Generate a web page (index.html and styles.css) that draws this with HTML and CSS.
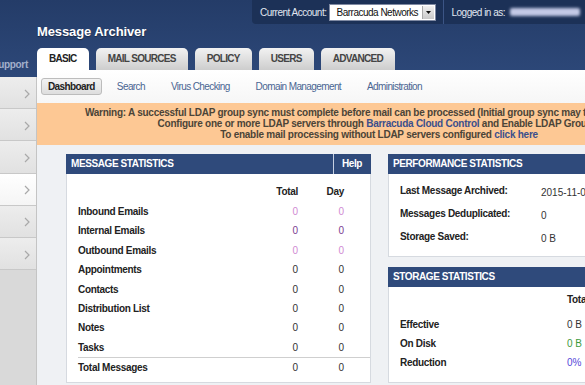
FILE: index.html
```html
<!DOCTYPE html>
<html lang="en">
<head>
  <meta charset="UTF-8" />
  <meta name="viewport" content="width=device-width, initial-scale=1.0" />
  <title>Message Archiver</title>
  <link rel="stylesheet" href="styles.css">
</head>
<body>
  <div class="page">
    <div class="side">
      <div class="side-head"><a class="support" href="#">Support</a></div>
      <ul class="side-nav">
        <li><svg class="chev" width="6" height="10" viewBox="0 0 6 10"><polyline points="1,1 5,5 1,9" /></svg></li>
        <li><svg class="chev" width="6" height="10" viewBox="0 0 6 10"><polyline points="1,1 5,5 1,9" /></svg></li>
        <li><svg class="chev" width="6" height="10" viewBox="0 0 6 10"><polyline points="1,1 5,5 1,9" /></svg></li>
        <li class="active"><svg class="chev" width="6" height="10" viewBox="0 0 6 10"><polyline points="1,1 5,5 1,9" /></svg></li>
        <li><svg class="chev" width="6" height="10" viewBox="0 0 6 10"><polyline points="1,1 5,5 1,9" /></svg></li>
        <li><svg class="chev" width="6" height="10" viewBox="0 0 6 10"><polyline points="1,1 5,5 1,9" /></svg></li>
      </ul>
    </div>

    <div class="main">
      <header class="masthead">
        <div class="topbar">
          <span class="topbar-label">Current Account:</span>
          <div class="account-select">
            <span>Barracuda Networks</span>
            <span class="select-arrow">
              <svg width="5" height="3" viewBox="0 0 5 3"><polygon points="0,0 5,0 2.5,3" /></svg>
            </span>
          </div>
          <span class="topbar-sep"></span>
          <span class="topbar-label">Logged in as:</span>
          <span class="user-name"></span>
          <span class="topbar-sep"></span>
        </div>
        <h1 class="title">Message Archiver</h1>
        <nav class="tabs">
          <a class="tab active" href="#">BASIC</a>
          <a class="tab" href="#">MAIL SOURCES</a>
          <a class="tab" href="#">POLICY</a>
          <a class="tab" href="#">USERS</a>
          <a class="tab" href="#">ADVANCED</a>
        </nav>
      </header>

      <nav class="subnav">
        <span class="subnav-current">Dashboard</span>
        <a class="subnav-link" href="#">Search</a>
        <a class="subnav-link" href="#">Virus Checking</a>
        <a class="subnav-link" href="#">Domain Management</a>
        <a class="subnav-link" href="#">Administration</a>
      </nav>

      <div class="warning">
        Warning: A successful LDAP group sync must complete before mail can be processed (Initial group sync may take a few minutes).<br>
        Configure one or more LDAP servers through <a href="#">Barracuda Cloud Control</a> and Enable LDAP Groups.<br>
        To enable mail processing without LDAP servers configured <a href="#">click here</a>
      </div>

      <div class="dashboard">
        <section class="panel panel-messages">
          <div class="panel-head">
            <span class="panel-title">MESSAGE STATISTICS</span>
            <a class="panel-help" href="#">Help</a>
          </div>
          <div class="panel-body">
            <div class="stats">
              <span></span><b class="num">Total</b><b class="num">Day</b><span></span>

              <b>Inbound Emails</b><span class="num light">0</span><span class="num light">0</span><span></span>
              <b>Internal Emails</b><span class="num dark">0</span><span class="num dark">0</span><span></span>
              <b>Outbound Emails</b><span class="num light">0</span><span class="num light">0</span><span></span>
              <b>Appointments</b><span class="num">0</span><span class="num">0</span><span></span>
              <b>Contacts</b><span class="num">0</span><span class="num">0</span><span></span>
              <b>Distribution List</b><span class="num">0</span><span class="num">0</span><span></span>
              <b>Notes</b><span class="num">0</span><span class="num">0</span><span></span>
              <b>Tasks</b><span class="num">0</span><span class="num">0</span><span></span>

              <b class="total">Total Messages</b><span class="num total">0</span><span class="num total">0</span><span class="total"></span>
            </div>
          </div>
        </section>

        <div class="right-col">
          <section class="panel">
            <div class="panel-head">
              <span class="panel-title">PERFORMANCE STATISTICS</span>
            </div>
            <div class="panel-body">
              <div class="perf">
                <b>Last Message Archived:</b><span class="perf-value">2015-11-05 09:14:32</span>
                <b>Messages Deduplicated:</b><span class="perf-value">0</span>
                <b>Storage Saved:</b><span class="perf-value">0 B</span>
              </div>
            </div>
          </section>

          <section class="panel">
            <div class="panel-head">
              <span class="panel-title">STORAGE STATISTICS</span>
            </div>
            <div class="panel-body">
              <div class="storage">
                <span></span><b class="storage-head">Total</b>
                <b>Effective</b><span>0 B</span>
                <b>On Disk</b><span class="green">0 B</span>
                <b>Reduction</b><span class="blue">0%</span>
              </div>
            </div>
          </section>
        </div>
      </div>
    </div>
  </div>
</body>
</html>
```

FILE: styles.css
```css
body {
  margin: 0;
  width: 585px;
  height: 385px;
  overflow: hidden;
  font-family: "Liberation Sans", Arial, sans-serif;
  font-size: 10px;
  color: #333;
}

a {
  text-decoration: none;
}

.page {
  display: flex;
  height: 385px;
  background: linear-gradient(#243c68, #2d4879) top / 100% 77px no-repeat, #d9d9d9;
}

/* left column */

.side {
  width: 37px;
  flex: none;
  display: flex;
  flex-direction: column;
}

.side-head {
  height: 77px;
  display: flex;
  justify-content: flex-end;
  align-items: flex-end;
  padding: 0 9px 6px 0;
  box-sizing: border-box;
}

.support {
  flex: none;
  color: #a3b0cb;
  font-weight: bold;
  letter-spacing: -0.3px;
  line-height: 12px;
  white-space: nowrap;
}

.side-nav {
  flex: 1;
  list-style: none;
  margin: 0;
  padding: 0;
  border-right: 1px solid #c4c4c4;
}

.side-nav li {
  height: 32.2px;
  box-sizing: border-box;
  border-bottom: 1px solid #c8c8c8;
  background: linear-gradient(#ededed, #e1e1e1);
  display: flex;
  align-items: center;
  justify-content: flex-end;
  padding: 2px 6px 0 0;
}

.side-nav li.active {
  background: linear-gradient(#ffffff, #f5f5f5);
}

.chev polyline {
  fill: none;
  stroke: #a9a9a9;
  stroke-width: 1.2;
}

/* main column */

.main {
  width: 684px;
  flex: none;
  display: flex;
  flex-direction: column;
}

.masthead {
  height: 70px;
}

.topbar {
  margin-left: 215px;
  height: 24px;
  background: #1c3157;
  border-bottom-left-radius: 4px;
  display: flex;
  align-items: center;
  padding-left: 8px;
  color: #e1e7f1;
  letter-spacing: -0.5px;
  white-space: nowrap;
}

.account-select {
  display: flex;
  align-items: center;
  width: 107px;
  height: 17px;
  margin-left: 3px;
  box-sizing: border-box;
  padding-left: 6px;
  background: #fff;
  border: 1px solid #7f8aa3;
  color: #111;
}

.select-arrow {
  margin-left: auto;
  margin-right: 1px;
  width: 11px;
  height: 13px;
  display: flex;
  align-items: center;
  justify-content: center;
  background: linear-gradient(#f0f0f0, #c9c9c9);
  border-left: 1px solid #a9a9a9;
}

.select-arrow polygon {
  fill: #111;
}

.topbar-sep {
  width: 1px;
  height: 24px;
  margin: 0 7px;
  background: #3c5585;
}

.user-name {
  width: 70px;
  height: 8px;
  margin-left: 5px;
  border-radius: 2px;
  background: #c3c9e6;
  filter: blur(1.5px);
}

.title {
  margin: 0;
  font-size: 13px;
  line-height: 16px;
  color: #fff;
  letter-spacing: -0.1px;
  text-shadow: 0 1px 1px rgba(0, 0, 0, 0.4);
}

.tabs {
  display: flex;
  gap: 7px;
  margin-top: 8px;
}

.tab {
  padding: 0 12px;
  line-height: 22px;
  border-radius: 5px 5px 0 0;
  background: linear-gradient(#f2f2f2, #cdcdcd);
  color: #444;
  font-weight: bold;
  letter-spacing: -0.7px;
}

.tab.active {
  background: #fff;
  color: #222;
}

.subnav {
  height: 33px;
  display: flex;
  align-items: center;
  padding-left: 4px;
  background: linear-gradient(#ffffff, #f6f6f6);
  letter-spacing: -0.6px;
}

.subnav-current {
  padding: 0 6px;
  margin-right: 2px;
  line-height: 15px;
  border: 1px solid #bcbcbc;
  border-radius: 3px;
  background: linear-gradient(#f3f3f3, #dddddd);
  font-weight: bold;
  color: #222;
}

.subnav-link {
  padding: 0 13px;
  color: #4a6592;
}

.warning {
  padding: 4px 0 5px;
  background: #fdc894;
  text-align: center;
  font-weight: bold;
  color: #4b4438;
  line-height: 11px;
  letter-spacing: -0.25px;
  white-space: nowrap;
}

.warning a {
  color: #3b4f8c;
}

/* dashboard */

.dashboard {
  flex: 1;
  display: flex;
  align-items: flex-start;
  gap: 17px;
  padding: 9px 29px 0;
  background: #eff1f4;
}

.panel-messages {
  width: 305px;
  flex: none;
}

.right-col {
  flex: 1;
  display: flex;
  flex-direction: column;
  gap: 10px;
}

.panel-head {
  display: flex;
  height: 20px;
  line-height: 20px;
  background: #2f4a7b;
  color: #fff;
  font-weight: bold;
  letter-spacing: -0.4px;
}

.panel-title {
  flex: 1;
  padding-left: 5px;
}

.panel-help {
  padding: 0 9px 0 8px;
  border-left: 1px solid #c6d0e2;
  color: #fff;
}

.panel-body {
  background: #fff;
  border: 1px solid #d6dae0;
  border-top: none;
}

.panel-body b {
  color: #222;
  letter-spacing: -0.3px;
}

.stats {
  display: grid;
  grid-template-columns: 180px 40px 46px 1fr;
  grid-template-rows: 20px repeat(8, 19.4px) 20px;
  margin-left: 11px;
  padding: 8px 0 5px;
  line-height: 19.4px;
}

.stats .num {
  text-align: right;
}

.stats .light {
  color: #d08ad3;
}

.stats .dark {
  color: #7c3d90;
}

.stats .total {
  border-top: 1px solid #cfcfcf;
  line-height: 19px;
}

.perf {
  display: grid;
  grid-template-columns: 141px 1fr;
  grid-auto-rows: 23px;
  padding: 7px 0 6px 11px;
  line-height: 19px;
  white-space: nowrap;
}

.perf-value {
  padding-top: 2px;
}

.storage {
  display: grid;
  grid-template-columns: 167px 1fr;
  grid-template-rows: 25px repeat(3, 19px);
  padding: 3px 0 10px 11px;
  line-height: 19px;
}

.storage-head {
  align-self: start;
}

.green {
  color: #3d9a3d;
}

.blue {
  color: #5548d9;
}
```
